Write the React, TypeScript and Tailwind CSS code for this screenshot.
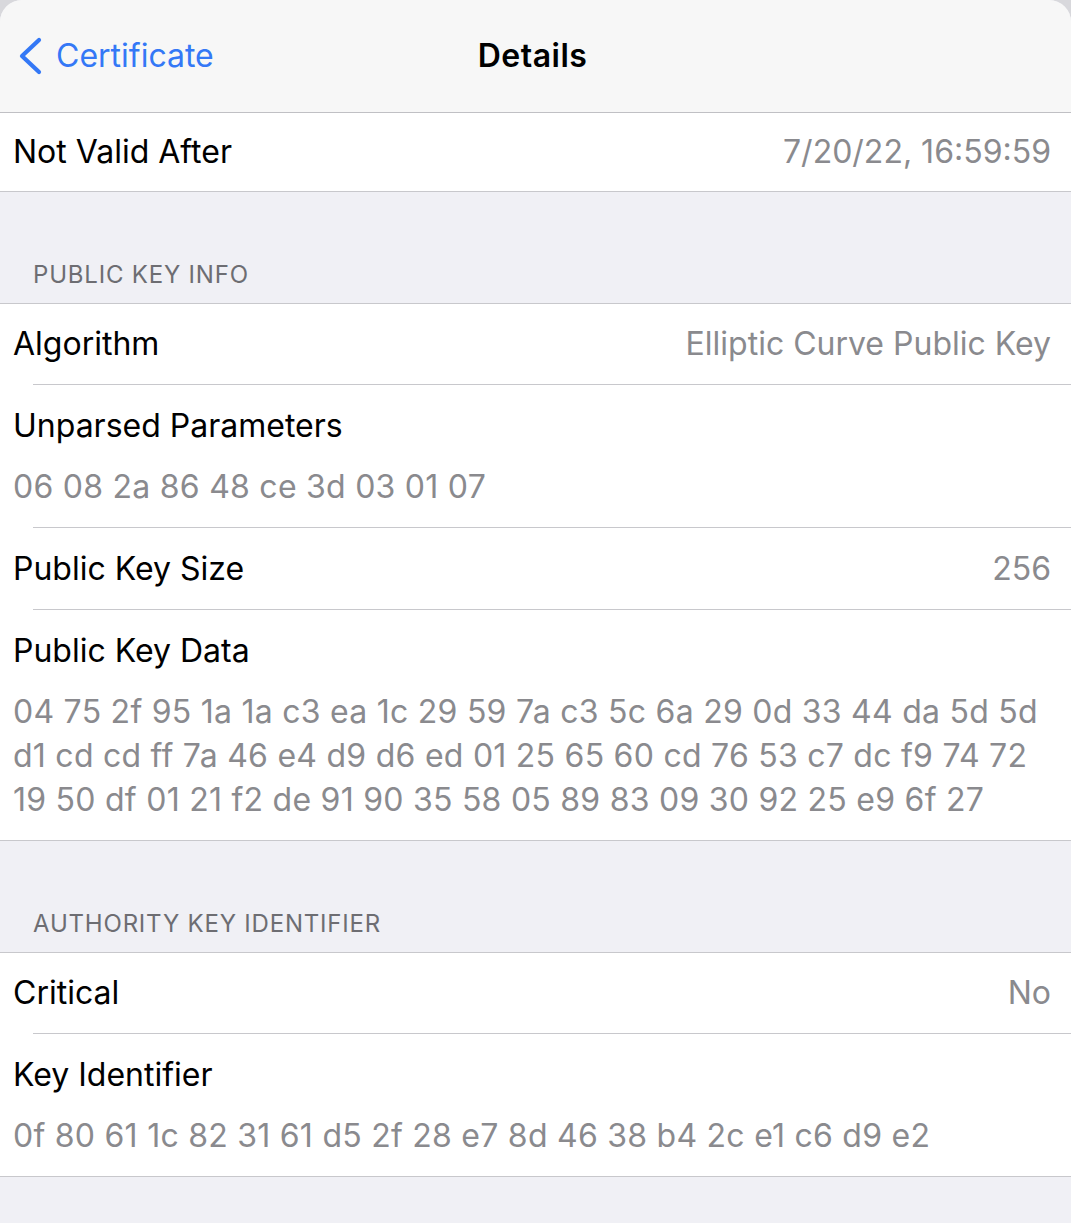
import React from "react";

const font = { fontFamily: "Inter, 'Liberation Sans', sans-serif" };

function SingleRow({ label, value, sep, h = "h-[80px]" }: { label: string; value: string; sep?: boolean; h?: string }) {
  return (
    <div className="relative bg-white">
      <div className={`flex ${h} items-center justify-between pl-[13px] pr-[20px]`}>
        <span className="text-[32px] text-black">{label}</span>
        <span className="text-[32px] text-[#8a8a8e]">{value}</span>
      </div>
      {sep && <div className="ml-[33px] h-px bg-[#c8c8cc]" />}
    </div>
  );
}

function MultiRow({ label, lines, sep }: { label: string; lines: string[]; sep?: boolean }) {
  return (
    <div className="bg-white">
      <div className="pl-[13px] pr-[20px] pb-[18px]">
        <div className="flex h-[80px] items-center pt-[2px] text-[32px] text-black">{label}</div>
        {lines.map((l, i) => (
          <div key={i} className="text-[32px] leading-[44px] tracking-[0.25px] text-[#8a8a8e] whitespace-nowrap">
            {l}
          </div>
        ))}
      </div>
      {sep && <div className="ml-[33px] h-px bg-[#c8c8cc]" />}
    </div>
  );
}

function SectionHeader({ title }: { title: string }) {
  return (
    <div className="flex h-[112px] items-end border-b border-[#c8c8cc] bg-[#f0f0f5] pb-[13px] pl-[33px]">
      <span className="text-[24px] leading-[30px] tracking-[0.8px] text-[#6d6d72]">{title}</span>
    </div>
  );
}

export default function App() {
  return (
    <div className="h-[1223px] w-[1071px] overflow-hidden bg-[#d8d8dc]" style={font}>
      <div className="h-full overflow-hidden rounded-t-[22px] bg-[#f0f0f5]">
        <div className="relative flex h-[113px] items-center border-b border-[#c0c0c4] bg-[#f7f7f7]">
          <div className="flex items-center pl-[18px]">
            <svg width="24" height="38" viewBox="0 0 24 38" fill="none">
              <path d="M21 3 L4 19 L21 35" stroke="#3478f6" strokeWidth="4.2" strokeLinecap="round" strokeLinejoin="round" />
            </svg>
            <span className="ml-[14px] text-[32px] text-[#3478f6]">Certificate</span>
          </div>
          <div className="absolute left-0 right-0 top-0 flex h-[112px] items-center justify-center pointer-events-none">
            <span className="mr-[6px] text-[32px] font-semibold tracking-[0.5px] text-black">Details</span>
          </div>
        </div>

        <div className="border-b border-[#c8c8cc]">
          <div className="flex h-[78px] items-center justify-between bg-white pl-[13px] pr-[20px]">
            <span className="text-[32px] text-black">Not Valid After</span>
            <span className="text-[32px] text-[#8a8a8e]">7/20/22, 16:59:59</span>
          </div>
        </div>

        <SectionHeader title="PUBLIC KEY INFO" />
        <SingleRow label="Algorithm" value="Elliptic Curve Public Key" sep />
        <MultiRow label="Unparsed Parameters" lines={["06 08 2a 86 48 ce 3d 03 01 07"]} sep />
        <SingleRow label="Public Key Size" value="256" sep h="h-[81px]" />
        <div className="border-b border-[#c8c8cc]">
          <MultiRow
            label="Public Key Data"
            lines={[
              "04 75 2f 95 1a 1a c3 ea 1c 29 59 7a c3 5c 6a 29 0d 33 44 da 5d 5d",
              "d1 cd cd ff 7a 46 e4 d9 d6 ed 01 25 65 60 cd 76 53 c7 dc f9 74 72",
              "19 50 df 01 21 f2 de 91 90 35 58 05 89 83 09 30 92 25 e9 6f 27",
            ]}
          />
        </div>

        <SectionHeader title="AUTHORITY KEY IDENTIFIER" />
        <SingleRow label="Critical" value="No" sep />
        <div className="border-b border-[#c8c8cc]">
          <MultiRow label="Key Identifier" lines={["0f 80 61 1c 82 31 61 d5 2f 28 e7 8d 46 38 b4 2c e1 c6 d9 e2"]} />
        </div>
      </div>
    </div>
  );
}
